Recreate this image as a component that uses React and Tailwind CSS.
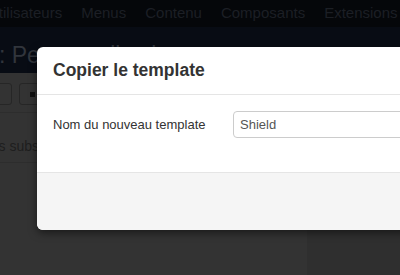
import React from "react";

function App() {
  return (
    <div
      className="relative w-[400px] h-[275px] overflow-hidden bg-[#333333]"
      style={{ fontFamily: '"Liberation Sans", Arial, sans-serif' }}
    >
      {/* Top nav (under overlay) */}
      <div className="h-[27px] bg-[#05070a] flex items-center">
        <ul className="flex items-center gap-[19px] -ml-[12px] text-[15px] text-[#1c1f25] whitespace-nowrap">
          <li>Utilisateurs</li>
          <li>Menus</li>
          <li>Contenu</li>
          <li>Composants</li>
          <li>Extensions</li>
        </ul>
      </div>

      {/* Page header */}
      <div className="h-[46px] bg-[#080c14] flex items-start pt-[17px]">
        <h1 className="-ml-[1px] text-[23px] text-[#31353c] whitespace-nowrap leading-none">
          : Personnalisation
        </h1>
      </div>

      {/* Toolbar */}
      <div className="h-[40px] border-b border-[#2d2d2d] flex items-start pt-[10px] gap-[7px] -ml-[20px]">
        <div className="w-[32px] h-[22px] border border-[#262626] rounded-[3px] bg-[#333]"></div>
        <div className="w-[40px] h-[22px] border border-[#262626] rounded-[3px] bg-[#333] flex items-center pl-[10px]">
          <span className="w-[5px] h-[5px] bg-[#111]"></span>
        </div>
      </div>

      {/* Content */}
      <div className="h-[50px] border-b border-[#2d2d2d] pt-[25px]">
        <p className="-ml-[17px] text-[14px] leading-[16px] text-[#1e1e1e] whitespace-nowrap">
          Les substitutions
        </p>
      </div>
      <div className="flex h-[112px]">
        <div className="w-[307px] bg-[#333333]"></div>
        <div className="flex-1 bg-[#2f2f2f]"></div>
      </div>

      {/* Modal */}
      <div className="absolute left-[37px] top-[47px] w-[420px] h-[183px] bg-white rounded-[6px] shadow-[0_3px_9px_rgba(0,0,0,0.5)] flex flex-col overflow-hidden">
        <div className="h-[48px] border-b border-[#e5e5e5] flex items-center px-[16px]">
          <h3 className="text-[17.5px] font-bold text-[#333333] leading-none">
            Copier le template
          </h3>
        </div>
        <div className="h-[77px] flex items-start pt-[16px] px-[16px]">
          <label className="w-[180px] text-[13px] text-[#333333] leading-[27px]">
            Nom du nouveau template
          </label>
          <div className="flex-1 h-[27px] border border-[#cccccc] rounded-[4px] flex items-center px-[6px] text-[13px] text-[#555555]">
            Shield
          </div>
        </div>
        <div className="flex-1 bg-[#f5f5f5] border-t border-[#e5e5e5]"></div>
      </div>
    </div>
  );
}

export default App;
